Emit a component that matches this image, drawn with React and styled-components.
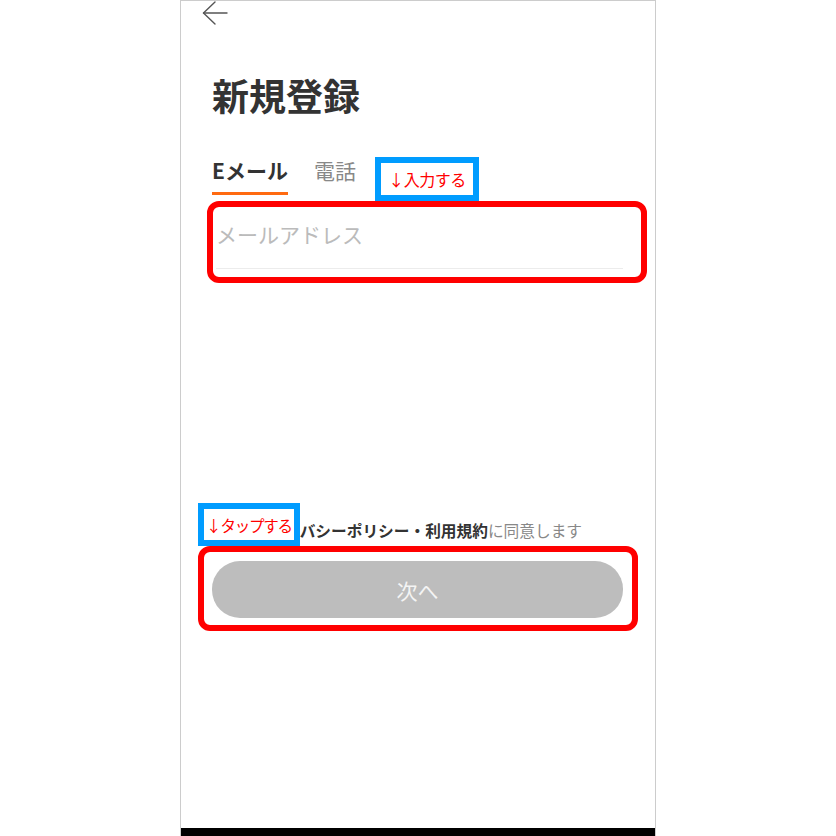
import React from 'react';
import styled, { createGlobalStyle } from 'styled-components';

const GlobalStyle = createGlobalStyle`
  html, body {
    margin: 0;
    padding: 0;
    background: #fff;
  }
  body {
    font-family: "Noto Sans CJK JP", "Noto Sans", sans-serif;
  }
`;

const Phone = styled.div`
  position: relative;
  box-sizing: border-box;
  width: 476px;
  height: 836px;
  margin: 0 auto;
  border: 1px solid #ccc;
  border-bottom: none;
  display: flex;
  flex-direction: column;
  background: #fff;
`;

const Header = styled.div`
  height: 44px;
  padding-left: 21px;
  display: flex;
  align-items: flex-start;
`;

const Body = styled.div`
  flex: 1;
  padding: 0 32px 0 31px;
  display: flex;
  flex-direction: column;
`;

const Title = styled.h1`
  margin: 28px 0 0;
  font-size: 37px;
  line-height: 45px;
  font-weight: 700;
  color: #333;
`;

const Tabs = styled.div`
  margin-top: 37px;
  display: flex;
  gap: 26px;
`;

const Tab = styled.div`
  display: flex;
  flex-direction: column;
  font-size: 21px;
  line-height: 30px;
  font-weight: ${p => (p.$active ? 700 : 400)};
  color: ${p => (p.$active ? '#333' : '#888')};

  &::after {
    content: '';
    height: 3px;
    margin-top: 7px;
    background: ${p => (p.$active ? '#ff6a10' : 'transparent')};
  }
`;

const Field = styled.div`
  margin: 24px 0 0 4px;
  padding-bottom: 19px;
  border-bottom: 1px solid #ececec;
  font-size: 21px;
  line-height: 30px;
  color: #bbb;
`;

const Agree = styled.p`
  margin: 251px 0 0;
  text-align: center;
  font-size: 15.7px;
  line-height: 22px;
  color: #888;
  white-space: nowrap;

  b {
    color: #333;
    font-weight: 700;
  }
`;

const NextButton = styled.button`
  margin-top: 19px;
  height: 57px;
  border: none;
  border-radius: 28px;
  background: #bdbdbd;
  color: #f4f4f4;
  font-family: inherit;
  font-size: 21px;
`;

const HomeBar = styled.div`
  height: 8px;
  background: #000;
`;

const Note = styled.div`
  position: absolute;
  left: ${p => p.$x}px;
  top: ${p => p.$y}px;
  width: ${p => p.$w}px;
  height: ${p => p.$h}px;
  box-sizing: border-box;
  border: 6px solid #009cff;
  background: #fff;
  display: flex;
  align-items: center;
  justify-content: center;
  white-space: nowrap;
  color: #f00;
  font-size: ${p => p.$size}px;
  letter-spacing: ${p => p.$track}px;
`;

const Frame = styled.div`
  position: absolute;
  left: ${p => p.$x}px;
  top: ${p => p.$y}px;
  width: ${p => p.$w}px;
  height: ${p => p.$h}px;
  box-sizing: border-box;
  border: 6px solid #f00;
  border-radius: 12px;
  pointer-events: none;
`;

const BackArrow = () => (
  <svg width="26" height="24" viewBox="0 0 26 24" fill="none" stroke="#555" strokeWidth="1.4" strokeLinecap="round" strokeLinejoin="round">
    <path d="M13 1 L1.5 12 L13 23" />
    <path d="M1.5 12 H25" />
  </svg>
);

export default function App() {
  return (
    <>
      <GlobalStyle />
      <Phone>
        <Header>
          <BackArrow />
        </Header>
        <Body>
          <Title>新規登録</Title>
          <Tabs>
            <Tab $active>Eメール</Tab>
            <Tab>電話</Tab>
          </Tabs>
          <Field>メールアドレス</Field>
          <Agree>
            <b>プライバシーポリシー・利用規約</b>に同意します
          </Agree>
          <NextButton>次へ</NextButton>
        </Body>
        <HomeBar />

        <Note $x={194} $y={156} $w={104} $h={44} $size={16} $track={-0.5}>↓入力する</Note>
        <Frame $x={26} $y={200} $w={440} $h={82} />
        <Note $x={17} $y={502} $w={102} $h={43} $size={15.5} $track={-1.2}>↓タップする</Note>
        <Frame $x={17} $y={545} $w={440} $h={85} />
      </Phone>
    </>
  );
}
